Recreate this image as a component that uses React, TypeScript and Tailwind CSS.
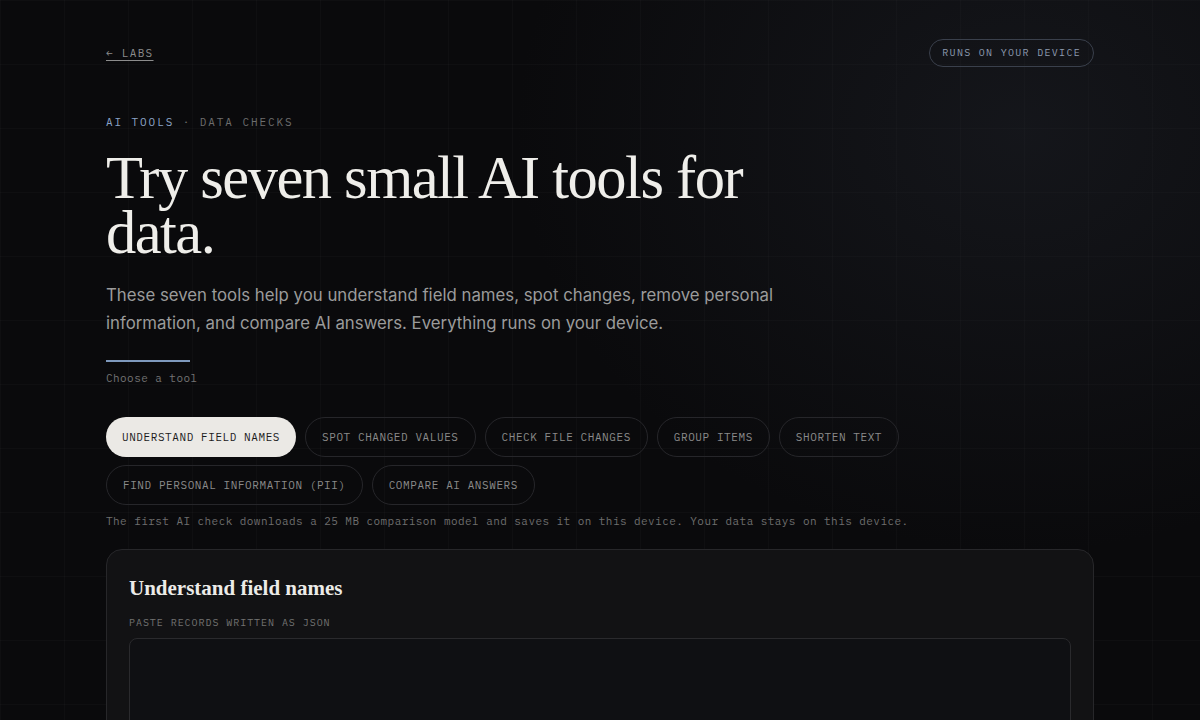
import React, { useState } from 'react';

const tools = [
  'Understand field names',
  'Spot changed values',
  'Check file changes',
  'Group items',
  'Shorten text',
  'Find personal information (PII)',
  'Compare AI answers',
];

const mono = "font-['IBM_Plex_Mono','DejaVu_Sans_Mono','Liberation_Mono',monospace]";
const serif = "font-['Liberation_Serif','DejaVu_Serif',serif]";

const App: React.FC = () => {
  const [active, setActive] = useState(0);

  return (
    <div className="relative min-h-screen overflow-hidden bg-[#0a0a0c] text-[#ecebe8]">
      {/* faint grid + glow */}
      <div className="pointer-events-none absolute inset-0 bg-[linear-gradient(rgba(255,255,255,0.018)_1px,transparent_1px),linear-gradient(90deg,rgba(255,255,255,0.018)_1px,transparent_1px)] bg-[size:64px_64px]" />
      <div className="pointer-events-none absolute inset-0 bg-[radial-gradient(ellipse_60%_70%_at_85%_15%,rgba(40,44,54,0.35),transparent_70%)]" />

      <div className="relative mx-auto w-[988px] pt-[39px]">
        {/* Top bar */}
        <div className="flex items-center justify-between">
          <a href="#" className={`${mono} text-[11px] tracking-[0.12em] text-[#8c8c8c] underline underline-offset-[3px] decoration-[#8c8c8c]`}>
            ← LABS
          </a>
          <span className={`${mono} rounded-full border border-[#3a404c] px-[12px] py-[6px] text-[10px] leading-[14px] tracking-[0.13em] text-[#8d9bb0]`}>
            RUNS ON YOUR DEVICE
          </span>
        </div>

        {/* Hero */}
        <div className={`${mono} mt-[47px] text-[11px] tracking-[0.175em]`}>
          <span className="text-[#8aa3c6]">AI TOOLS</span>
          <span className="text-[#6d6d6d]"> · DATA CHECKS</span>
        </div>
        <h1 className={`${serif} mt-[19px] w-[700px] text-[60.5px] leading-[55px] tracking-[-0.025em] text-[#efeeea]`}>
          Try seven small AI tools for data.
        </h1>
        <p className="mt-[21px] w-[700px] font-['Inter',sans-serif] text-[16.8px] leading-[28px] text-[#9b9b9b]">
          These seven tools help you understand field names, spot changes, remove personal information, and compare AI answers. Everything runs on your device.
        </p>

        <div className="mt-[23px] h-[2px] w-[84px] bg-[#7e99bd]" />
        <div className={`${mono} mt-[8px] text-[11px] tracking-[0.04em] text-[#737373]`}>Choose a tool</div>

        {/* Tool pills */}
        <div className="mt-[31px] flex w-[820px] flex-wrap gap-x-[9px] gap-y-[8px]">
          {tools.map((t, i) => (
            <button
              key={t}
              onClick={() => setActive(i)}
              className={`${mono} h-[40px] rounded-full px-[16px] text-[11px] uppercase tracking-[0.053em] ${
                i === active
                  ? 'bg-[#ebe9e5] text-[#1b1b1c]'
                  : 'border border-[#26262a] text-[#8a8a8a]'
              }`}
            >
              {t}
            </button>
          ))}
        </div>
        <p className={`${mono} mt-[8px] text-[11px] tracking-[0.04em] text-[#6e6e6e]`}>
          The first AI check downloads a 25 MB comparison model and saves it on this device. Your data stays on this device.
        </p>

        {/* Tool card */}
        <div className="mt-[19px] rounded-[16px] border border-[#27272a] bg-[#121214] px-[22px] pt-[24px] pb-[24px]">
          <h2 className={`${serif} text-[21px] font-bold leading-[28px] text-[#ecebe8]`}>
            {tools[active]}
          </h2>
          <div className={`${mono} mt-[13px] text-[10px] tracking-[0.095em] text-[#727272]`}>
            PASTE RECORDS WRITTEN AS JSON
          </div>
          <div className="mt-[8px] h-[200px] rounded-[8px] border border-[#2a2a2d] bg-[#0f1013]" />
        </div>
      </div>
    </div>
  );
};

export default App;
